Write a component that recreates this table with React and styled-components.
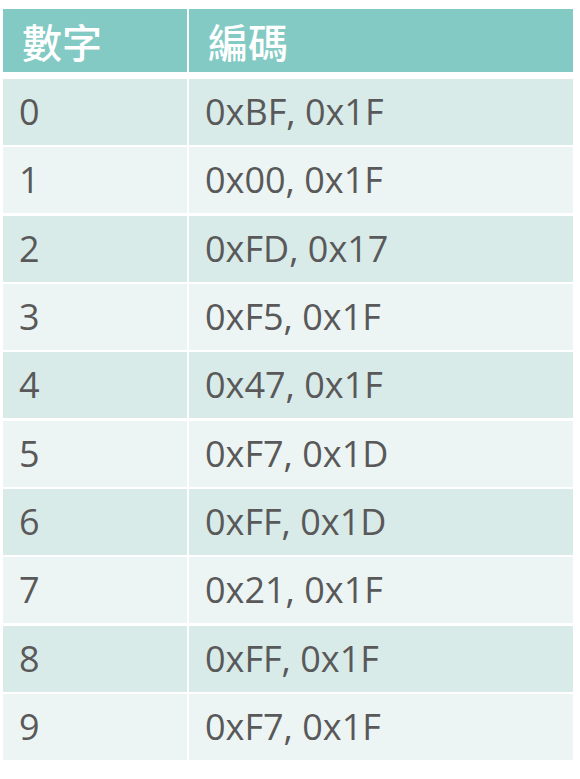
import styled, { createGlobalStyle } from 'styled-components'

const GlobalStyle = createGlobalStyle`
  body {
    margin: 0;
    background: #ffffff;
  }
`

const rows = [
  ['0', '0xBF, 0x1F'],
  ['1', '0x00, 0x1F'],
  ['2', '0xFD, 0x17'],
  ['3', '0xF5, 0x1F'],
  ['4', '0x47, 0x1F'],
  ['5', '0xF7, 0x1D'],
  ['6', '0xFF, 0x1D'],
  ['7', '0x21, 0x1F'],
  ['8', '0xFF, 0x1F'],
  ['9', '0xF7, 0x1F'],
]

const Page = styled.div`
  padding: 9px 0 0 3px;
  width: 570px;
`

const Table = styled.div`
  display: flex;
  flex-direction: column;
  gap: 2.33px;
`

const Row = styled.div`
  display: grid;
  grid-template-columns: 184px 384px;
  column-gap: 2px;
  height: ${p => (p.$head ? '63px' : '66px')};
  margin-bottom: ${p => (p.$head ? '4.67px' : '0')};
`

const Cell = styled.div`
  display: flex;
  align-items: center;
  padding-left: ${p => (p.$head ? '19px' : '16px')};
  background: ${p => (p.$head ? '#82cac3' : p.$alt ? '#edf5f4' : '#d9ebe9')};
  color: ${p => (p.$head ? '#ffffff' : '#595959')};
  font-family: ${p => (p.$head
    ? '"Noto Sans CJK TC", "Noto Sans", sans-serif'
    : '"Open Sans", "Noto Sans", sans-serif')};
  font-size: ${p => (p.$head ? '40px' : '36px')};
  font-weight: ${p => (p.$head ? 500 : 400)};
  line-height: 1;
`

export default function App() {
  return (
    <Page>
      <GlobalStyle />
      <Table>
        <Row $head>
          <Cell $head>數字</Cell>
          <Cell $head>編碼</Cell>
        </Row>
        {rows.map(([digit, code], i) => (
          <Row key={digit}>
            <Cell $alt={i % 2 === 1}>{digit}</Cell>
            <Cell $alt={i % 2 === 1}>{code}</Cell>
          </Row>
        ))}
      </Table>
    </Page>
  )
}
